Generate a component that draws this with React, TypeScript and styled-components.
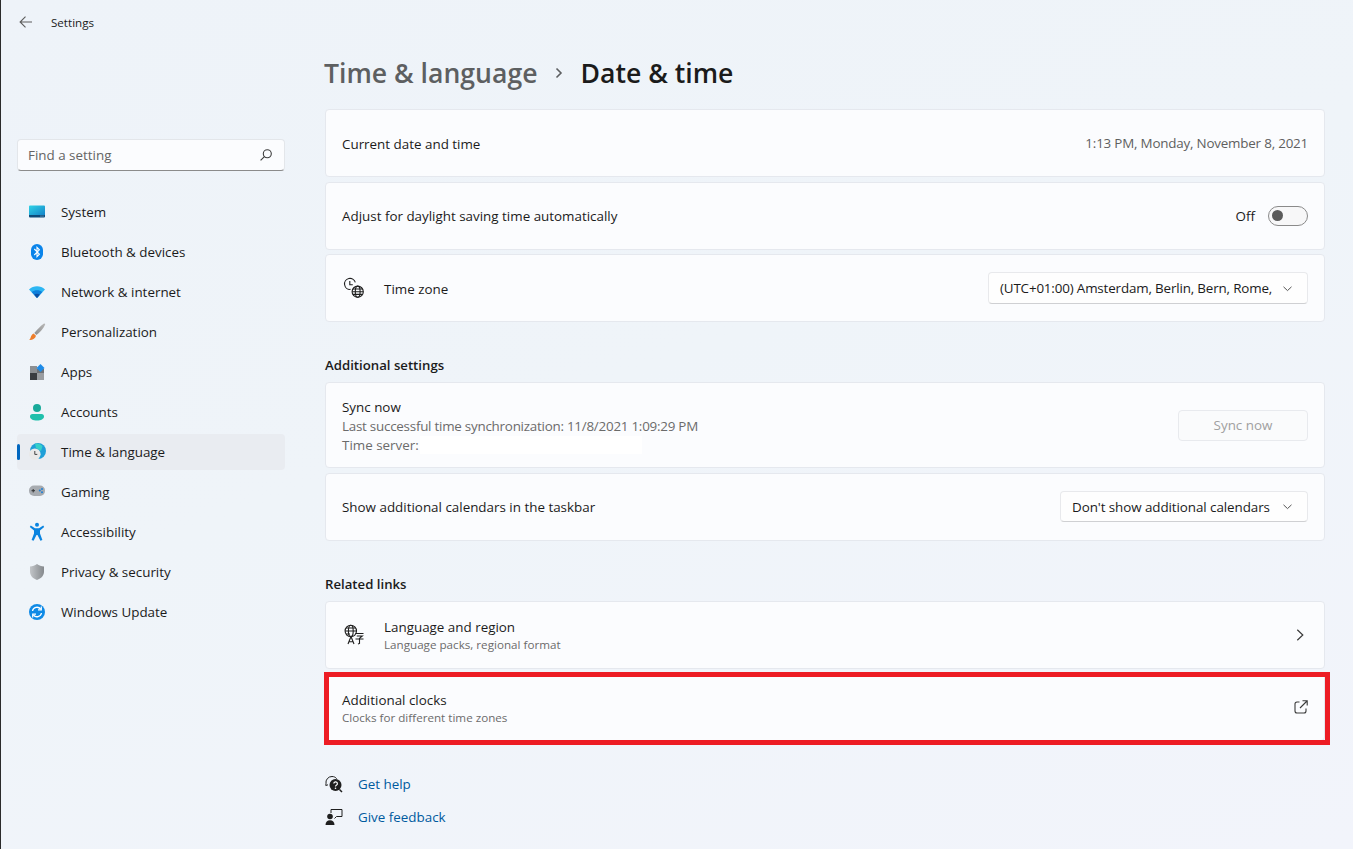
import React from 'react';
import styled, { createGlobalStyle } from 'styled-components';

const GlobalStyle = createGlobalStyle`
    html, body {
        margin: 0;
        padding: 0;
        height: 100%;
    }
    body {
        background: linear-gradient(160deg, #eef3f9 0%, #eff4f9 45%, #f2f4fb 100%);
        font-family: "Open Sans", "Noto Sans", "Liberation Sans", sans-serif;
        font-size: 13.4px;
        color: #1b1b1b;
        overflow: hidden;
    }
`;

const Window = styled.div`
    width: 1353px;
    height: 849px;
    box-sizing: border-box;
    border-left: 1px solid #2b2b2b;
    display: flex;
    flex-direction: column;
`;

const TitleBar = styled.div`
    height: 44px;
    flex: none;
    display: flex;
    align-items: center;
    padding-left: 18px;
    gap: 18px;
    font-size: 11.6px;
`;

const Body = styled.div`
    display: flex;
    flex: 1;
`;

const Sidebar = styled.nav`
    width: 300px;
    flex: none;
    box-sizing: border-box;
    padding: 95px 0 0 16px;
`;

const Search = styled.div`
    width: 268px;
    height: 31.5px;
    box-sizing: border-box;
    display: flex;
    align-items: center;
    justify-content: space-between;
    padding: 0 11px 0 10px;
    background: #fbfcfe;
    border: 1px solid #e3e6ea;
    border-bottom: 1px solid #8b8b8b;
    border-radius: 4px;
    color: #646464;
`;

const NavList = styled.div`
    display: flex;
    flex-direction: column;
    gap: 4px;
    margin-top: 23.5px;
`;

const NavItem = styled.div<{ $active?: boolean }>`
    position: relative;
    width: 268px;
    height: 36px;
    box-sizing: border-box;
    display: flex;
    align-items: center;
    gap: 14px;
    padding-left: 10px;
    border-radius: 4px;
    background: ${props => props.$active ? '#e9ecf1' : 'transparent'};

    &::before {
        content: '';
        display: ${props => props.$active ? 'block' : 'none'};
        position: absolute;
        left: 0;
        top: 10px;
        width: 3px;
        height: 16px;
        border-radius: 2px;
        background: #0067c0;
    }
`;

const Main = styled.main`
    width: 1000px;
    margin-left: 24px;
    flex: none;
`;

const Breadcrumb = styled.h1`
    margin: 0 0 7px -1px;
    height: 58px;
    display: flex;
    align-items: center;
    gap: 15.5px;
    font-size: 26.6px;
    font-weight: 600;
    color: #1b1b1b;
`;

const Parent = styled.span`
    color: #5d5f61;
`;

const Stack = styled.div`
    display: flex;
    flex-direction: column;
    gap: 4.5px;
`;

const SectionTitle = styled.h2`
    margin: 33px 0 7px;
    height: 20px;
    line-height: 20px;
    font-size: 13.2px;
    font-weight: 600;
    color: #1b1b1b;
`;

const Card = styled.div<{ $highlight?: boolean; $tall?: boolean }>`
    position: relative;
    box-sizing: border-box;
    height: ${props => props.$tall ? '86px' : '68px'};
    display: flex;
    align-items: center;
    padding: 0 16px;
    background: #fbfcfe;
    border: 1px solid #e5e8ee;
    border-radius: 4px;

    &::after {
        content: '';
        display: ${props => props.$highlight ? 'block' : 'none'};
        position: absolute;
        left: -2px;
        top: -2.5px;
        right: -6px;
        bottom: -4.5px;
        border: 5px solid #ed1c24;
    }
`;

const CardIcon = styled.span`
    width: 24px;
    height: 24px;
    flex: none;
    margin-right: 18px;
    display: flex;
    align-items: center;
    justify-content: center;
`;

const CardText = styled.div`
    flex: 1;
    min-width: 0;
    display: flex;
    flex-direction: column;
    padding-top: 2px;
`;

const Line = styled.span<{ $muted?: boolean; $tight?: boolean }>`
    line-height: 19px;
    color: ${props => props.$muted ? '#6b6b6b' : '#1b1b1b'};
    letter-spacing: ${props => props.$tight ? '-0.24px' : 'normal'};
`;

const Caption = styled.span`
    font-size: 11.65px;
    line-height: 16px;
    color: #6b6b6b;
`;

const Value = styled.span`
    color: #5f5f5f;
    letter-spacing: -0.2px;
`;

const Redacted = styled.span`
    position: absolute;
    left: 94px;
    top: 53px;
    width: 222px;
    height: 18px;
    background: #fff;
`;

const ToggleWrap = styled.div`
    display: flex;
    align-items: center;
    gap: 13px;
`;

const Toggle = styled.span`
    width: 40px;
    height: 20px;
    box-sizing: border-box;
    display: flex;
    align-items: center;
    padding-left: 3px;
    background: #f7f7f8;
    border: 1px solid #8a8a8a;
    border-radius: 10px;

    &::before {
        content: '';
        width: 11px;
        height: 11px;
        border-radius: 50%;
        background: #5a5a5a;
    }
`;

const Select = styled.div<{ $width: number; $tracking: number }>`
    width: ${props => props.$width}px;
    height: 31.5px;
    box-sizing: border-box;
    flex: none;
    display: flex;
    align-items: center;
    justify-content: space-between;
    padding: 0 14px 0 11px;
    background: #fefefe;
    border: 1px solid #e8e9ec;
    border-bottom-color: #cfd0d3;
    border-radius: 4px;
    white-space: nowrap;
    letter-spacing: ${props => props.$tracking}px;
`;

const SyncButton = styled.div`
    width: 130px;
    height: 31px;
    box-sizing: border-box;
    flex: none;
    display: flex;
    align-items: center;
    justify-content: center;
    background: #fafbfc;
    border: 1px solid #e8eaee;
    border-radius: 4px;
    color: #a0a0a0;
`;

const ArrowSlot = styled.span`
    display: flex;
    margin-right: 4px;
`;

const Links = styled.div`
    margin-top: 31px;
    display: flex;
    flex-direction: column;
    gap: 9px;
`;

const HelpLink = styled.a`
    height: 24px;
    display: flex;
    align-items: center;
    gap: 15px;
    color: #005a9e;
`;

const Back = () => (
    <svg width="14" height="14" viewBox="0 0 14 14" fill="none" stroke="#5c5c5c" strokeWidth="1.1">
        <path d="M13 7H1.2M6.5 1.6 1.1 7l5.4 5.4" />
    </svg>
);

const Magnifier = () => (
    <svg width="14" height="14" viewBox="0 0 14 14" fill="none" stroke="#3c3c3c" strokeWidth="1.1">
        <circle cx="8.3" cy="5.7" r="4" />
        <path d="M5.4 8.6 1.6 12.4" />
    </svg>
);

const Chevron = () => (
    <svg width="11" height="11" viewBox="0 0 11 11" fill="none" stroke="#555" strokeWidth="1">
        <path d="M1.5 3.8 5.5 7.6 9.5 3.8" />
    </svg>
);

const Crumb = () => (
    <svg width="12" height="14" viewBox="0 0 12 14" fill="none" stroke="#5d5f61" strokeWidth="1.6">
        <path d="M3.5 2.5 8 7l-4.5 4.5" />
    </svg>
);

const Arrow = () => (
    <svg width="10" height="14" viewBox="0 0 10 14" fill="none" stroke="#3a3a3a" strokeWidth="1.2">
        <path d="M3.3 1.800 8.800 7 3.300 12.200" />
    </svg>
);

const External = () => (
    <svg width="14" height="14" viewBox="0 0 14 14" fill="none" stroke="#3a3a3a" strokeWidth="1.1">
        <path d="M5.5 2H3a2 2 0 0 0-2 2v7a2 2 0 0 0 2 2h7a2 2 0 0 0 2-2V8.500" />
        <path d="M6 8 13 1M8.500 .8H13.200V5.500" />
    </svg>
);

const ClockGlobe = () => (
    <svg width="22" height="22" viewBox="0 0 22 22" fill="none" stroke="#1f1f1f" strokeWidth="1.1">
        <path d="M7.500 12.400A5.500 5.500 0 1 1 12.300 5.300" />
        <path d="M6.800 4v3.800h3" />
        <circle cx="14.700" cy="14.700" r="5.600" />
        <ellipse cx="14.700" cy="14.700" rx="2.400" ry="5.600" />
        <path d="M9.100 14.700h11.200M9.900 12h9.600M9.900 17.400h9.600" />
    </svg>
);

const GlobeLang = () => (
    <svg width="22" height="22" viewBox="0 0 22 22" fill="none" stroke="#1f1f1f" strokeWidth="1.1">
        <circle cx="7.800" cy="7" r="5.700" />
        <ellipse cx="7.800" cy="7" rx="2.400" ry="5.700" />
        <path d="M2.100 7h11.400M3 4h9.600M3 10h4" />
        <path d="M5 20l3-7.500 3 7.500M6 17.700h4" fill="#fbfcfe" />
        <path d="M12.500 9.500h8M13.800 12h5.500l-2.600 2M12.500 15h8M16.500 14v5.500l-1.500.6" />
    </svg>
);

const HelpIcon = () => (
    <svg width="18" height="18" viewBox="0 0 18 18" fill="none">
        <path d="M1 8.500A6 6 0 0 1 7 1.500c2 0 3.600.8 4.700 2.200" stroke="#1f1f1f" strokeWidth="1" />
        <path d="M1 8.500 .8 10.500 3 9.800" stroke="#1f1f1f" strokeWidth="1" />
        <circle cx="10.500" cy="10" r="6" fill="#1f1f1f" />
        <path d="M14.500 14.500 17 17" stroke="#1f1f1f" strokeWidth="1.500" />
        <path d="M8.800 8.600a1.800 1.800 0 1 1 2.600 1.600c-.6.300-.9.700-.9 1.300" stroke="#fff" strokeWidth="1.200" />
        <circle cx="10.500" cy="13.300" r=".8" fill="#fff" />
    </svg>
);

const FeedbackIcon = () => (
    <svg width="18" height="18" viewBox="0 0 18 18" fill="none">
        <circle cx="5" cy="8.500" r="2.800" fill="#1f1f1f" />
        <path d="M.5 17c0-3 1.800-4.800 4.500-4.800S9.500 14 9.500 17z" fill="#1f1f1f" />
        <path d="M6 5V1.500h11V8.500H11.500L9.500 10.500" stroke="#1f1f1f" strokeWidth="1" />
    </svg>
);

const SystemIcon = () => (
    <svg width="20" height="20" viewBox="0 0 20 20">
        <defs>
            <linearGradient id="sys" x1="0" y1="0" x2="1" y2="1">
                <stop offset="0" stopColor="#2fd3e6" />
                <stop offset="1" stopColor="#1583c9" />
            </linearGradient>
        </defs>
        <path d="M3 3.500h14a1 1 0 0 1 1 1V13H2V4.500a1 1 0 0 1 1-1z" fill="url(#sys)" />
        <path d="M2 13h16v1.500a1 1 0 0 1-1 1H3a1 1 0 0 1-1-1z" fill="#0d4a7a" />
        <path d="M13.500 14.100h1M15.500 14.100h1" stroke="#9fd4ee" strokeWidth=".8" />
    </svg>
);

const BluetoothIcon = () => (
    <svg width="20" height="20" viewBox="0 0 20 20">
        <rect x="4" y="2" width="12" height="16" rx="6" fill="#0a84ea" />
        <path d="M7.300 7 12.400 12.200 10 14.700V5.300L12.400 7.800 7.300 13" fill="none" stroke="#fff" strokeWidth="1.100" />
    </svg>
);

const NetworkIcon = () => (
    <svg width="20" height="20" viewBox="0 0 20 20">
        <path d="M2 7.500C6.500 3.200 13.500 3.200 18 7.500l-8 8.500z" fill="#2cb6f3" />
        <path d="M4.700 10C7.600 7.500 12.400 7.500 15.300 10L10 16z" fill="#0e7fdb" />
        <path d="M7.200 12.800c1.600-1.300 4-1.300 5.600 0L10 16z" fill="#0c4fa3" />
    </svg>
);

const BrushIcon = () => (
    <svg width="20" height="20" viewBox="0 0 20 20">
        <defs>
            <linearGradient id="brush" x1="0" y1="1" x2="1" y2="0">
                <stop offset="0" stopColor="#8d8d8d" />
                <stop offset="1" stopColor="#b8b8b8" />
            </linearGradient>
        </defs>
        <path d="M17 1.500c.8 0 1.300.6 1.100 1.300C16.500 6.500 13 10.500 9.500 13L7.300 11C10 7.700 13.500 4 17 1.500z" fill="url(#brush)" />
        <path d="M6.600 11.500 9 13.700c-.6 2.700-3.300 4.400-6.800 4.200 1.500-1.300 1.300-2.500 2-4 .5-1 1.300-1.800 2.400-2.400z" fill="#ed7d2b" />
    </svg>
);

const AppsIcon = () => (
    <svg width="20" height="20" viewBox="0 0 20 20">
        <rect x="3" y="4" width="7" height="7" fill="#8c8f93" />
        <rect x="3" y="11" width="7" height="7" fill="#3a3c40" />
        <rect x="10" y="11" width="7" height="7" fill="#9a9da1" />
        <rect x="10" y="7" width="7" height="4" fill="#6f7276" />
        <path d="M13.500 2 17.500 6 13.500 10 9.500 6z" fill="#1d8be8" />
    </svg>
);

const AccountsIcon = () => (
    <svg width="20" height="20" viewBox="0 0 20 20">
        <circle cx="10" cy="6" r="4" fill="#18a99a" />
        <path d="M3 14.500A2.500 2.500 0 0 1 5.500 12h9a2.500 2.500 0 0 1 2.500 2.500c0 2.500-3 4-7 4s-7-1.500-7-4z" fill="#1fc0ac" />
    </svg>
);

const TimeIcon = () => (
    <svg width="20" height="20" viewBox="0 0 20 20">
        <circle cx="11" cy="9" r="8" fill="#1f9fd8" />
        <path d="M8 1.700c3-.7 5.700.5 7.500 2.500L14 9 9 6z" fill="#37d0c8" />
        <circle cx="7.800" cy="12.200" r="5.800" fill="#e9e9e9" />
        <path d="M7.800 9v3.400h2.500" fill="none" stroke="#444" strokeWidth="1" />
    </svg>
);

const GamingIcon = () => (
    <svg width="20" height="20" viewBox="0 0 20 20">
        <rect x="2" y="3.500" width="16" height="10.500" rx="5" fill="#a7abb0" />
        <path d="M4.500 8.700h3.500M6.200 7v3.400" stroke="#333" strokeWidth="1" />
        <circle cx="12.800" cy="8.600" r="1" fill="#1c7fd6" />
        <circle cx="15" cy="6.900" r="1" fill="#1c7fd6" />
        <circle cx="15" cy="10.200" r="1" fill="#1c7fd6" />
    </svg>
);

const AccessIcon = () => (
    <svg width="20" height="20" viewBox="0 0 20 20">
        <circle cx="10" cy="2.800" r="2" fill="#0a84e0" />
        <path d="M3.800 3.500 8 6.300h4l4.200-2.800 1 1.400-4.200 3.600V11.500l2.400 6.500-2 .8L10.500 13h-1l-2.900 5.800-2-.8L7 11.500V8.500L2.800 4.900z" fill="#0a84e0" />
    </svg>
);

const ShieldIcon = () => (
    <svg width="20" height="20" viewBox="0 0 20 20">
        <defs>
            <linearGradient id="shield" x1="0" y1="0" x2="1" y2="0">
                <stop offset="0" stopColor="#c2c5c8" />
                <stop offset="1" stopColor="#85898d" />
            </linearGradient>
        </defs>
        <path d="M10 2c2 1.400 4.300 2.200 7 2.400v5.100c0 4-2.700 7-7 8.500-4.300-1.500-7-4.500-7-8.500V4.400C5.700 4.200 8 3.400 10 2z" fill="url(#shield)" />
    </svg>
);

const UpdateIcon = () => (
    <svg width="20" height="20" viewBox="0 0 20 20">
        <circle cx="10" cy="10" r="8" fill="#0f8ae6" />
        <path d="M5.500 9A4.600 4.600 0 0 1 13.600 7M14.500 11A4.600 4.600 0 0 1 6.400 13" fill="none" stroke="#fff" strokeWidth="1.300" />
        <path d="M14.300 4.500v3.300H11M5.700 15.500v-3.300H9" fill="none" stroke="#fff" strokeWidth="1.200" />
    </svg>
);

const NAV = [
    { label: 'System', icon: <SystemIcon /> },
    { label: 'Bluetooth & devices', icon: <BluetoothIcon /> },
    { label: 'Network & internet', icon: <NetworkIcon /> },
    { label: 'Personalization', icon: <BrushIcon /> },
    { label: 'Apps', icon: <AppsIcon /> },
    { label: 'Accounts', icon: <AccountsIcon /> },
    { label: 'Time & language', icon: <TimeIcon />, active: true },
    { label: 'Gaming', icon: <GamingIcon /> },
    { label: 'Accessibility', icon: <AccessIcon /> },
    { label: 'Privacy & security', icon: <ShieldIcon /> },
    { label: 'Windows Update', icon: <UpdateIcon /> },
];

export default function App() {
    return (
        <Window>
            <GlobalStyle />
            <TitleBar>
                <Back />
                <span>Settings</span>
            </TitleBar>
            <Body>
                <Sidebar>
                    <Search>
                        <span>Find a setting</span>
                        <Magnifier />
                    </Search>
                    <NavList>
                        {NAV.map(item => (
                            <NavItem key={item.label} $active={item.active}>
                                {item.icon}
                                <span>{item.label}</span>
                            </NavItem>
                        ))}
                    </NavList>
                </Sidebar>
                <Main>
                    <Breadcrumb>
                        <Parent>Time &amp; language</Parent>
                        <Crumb />
                        <span>Date &amp; time</span>
                    </Breadcrumb>
                    <Stack>
                        <Card>
                            <CardText><Line>Current date and time</Line></CardText>
                            <Value>1:13 PM, Monday, November 8, 2021</Value>
                        </Card>
                        <Card>
                            <CardText><Line>Adjust for daylight saving time automatically</Line></CardText>
                            <ToggleWrap>
                                <span>Off</span>
                                <Toggle />
                            </ToggleWrap>
                        </Card>
                        <Card>
                            <CardIcon><ClockGlobe /></CardIcon>
                            <CardText><Line>Time zone</Line></CardText>
                            <Select $width={320} $tracking={-0.16}>
                                <span>(UTC+01:00) Amsterdam, Berlin, Bern, Rome,</span>
                                <Chevron />
                            </Select>
                        </Card>
                    </Stack>
                    <SectionTitle>Additional settings</SectionTitle>
                    <Stack>
                        <Card $tall>
                            <CardText>
                                <Line>Sync now</Line>
                                <Line $muted $tight>Last successful time synchronization: 11/8/2021 1:09:29 PM</Line>
                                <Line $muted>Time server:</Line>
                            </CardText>
                            <Redacted />
                            <SyncButton>Sync now</SyncButton>
                        </Card>
                        <Card>
                            <CardText><Line>Show additional calendars in the taskbar</Line></CardText>
                            <Select $width={248} $tracking={-0.07}>
                                <span>Don't show additional calendars</span>
                                <Chevron />
                            </Select>
                        </Card>
                    </Stack>
                    <SectionTitle>Related links</SectionTitle>
                    <Stack>
                        <Card>
                            <CardIcon><GlobeLang /></CardIcon>
                            <CardText>
                                <Line>Language and region</Line>
                                <Caption>Language packs, regional format</Caption>
                            </CardText>
                            <ArrowSlot><Arrow /></ArrowSlot>
                        </Card>
                        <Card $highlight>
                            <CardText>
                                <Line>Additional clocks</Line>
                                <Caption>Clocks for different time zones</Caption>
                            </CardText>
                            <External />
                        </Card>
                    </Stack>
                    <Links>
                        <HelpLink><HelpIcon /><span>Get help</span></HelpLink>
                        <HelpLink><FeedbackIcon /><span>Give feedback</span></HelpLink>
                    </Links>
                </Main>
            </Body>
        </Window>
    );
}
